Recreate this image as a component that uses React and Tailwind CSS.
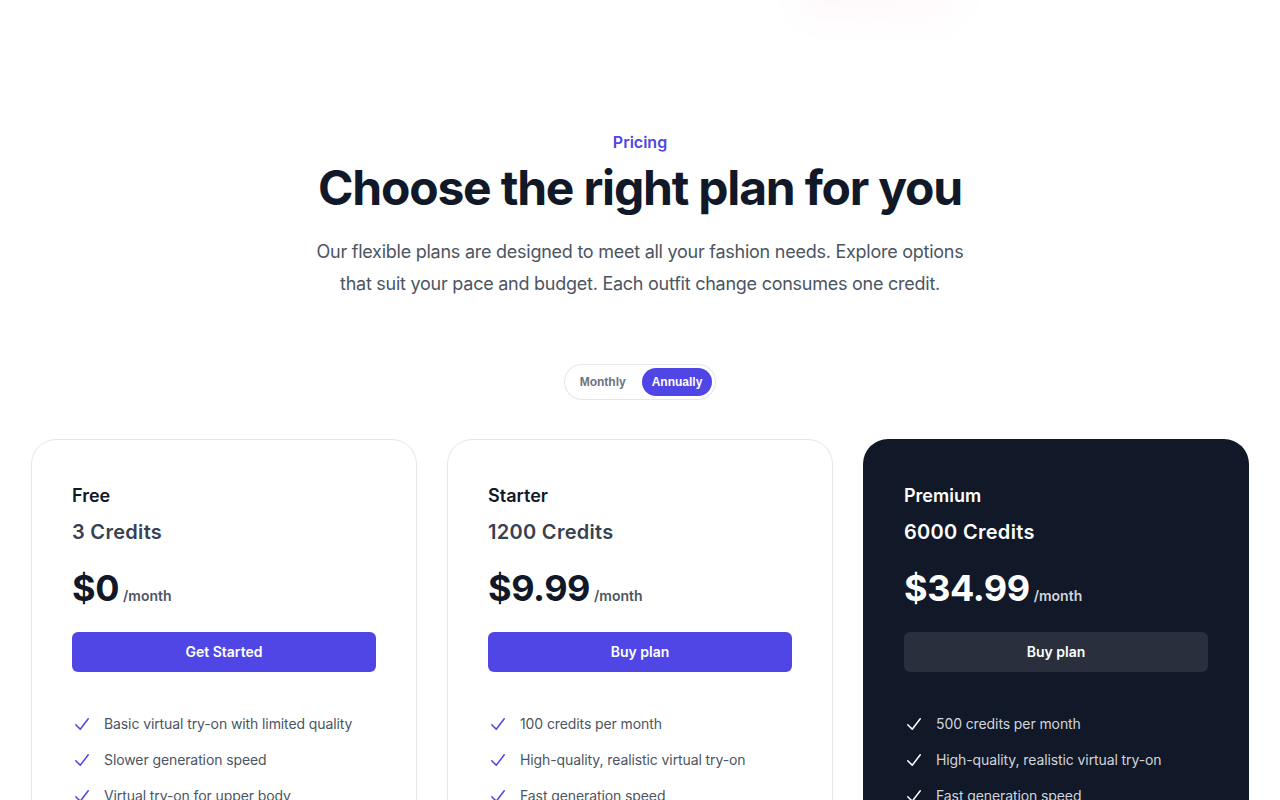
import React, { useState } from "react";

const plans = [
  {
    name: "Free",
    credits: "3 Credits",
    price: "$0",
    cta: "Get Started",
    featured: false,
    features: [
      "Basic virtual try-on with limited quality",
      "Slower generation speed",
      "Virtual try-on for upper body",
      "Community support",
    ],
  },
  {
    name: "Starter",
    credits: "1200 Credits",
    price: "$9.99",
    cta: "Buy plan",
    featured: false,
    features: [
      "100 credits per month",
      "High-quality, realistic virtual try-on",
      "Fast generation speed",
      "Virtual try-on for full body",
    ],
  },
  {
    name: "Premium",
    credits: "6000 Credits",
    price: "$34.99",
    cta: "Buy plan",
    featured: true,
    features: [
      "500 credits per month",
      "High-quality, realistic virtual try-on",
      "Fast generation speed",
      "Priority support",
    ],
  },
];

function CheckIcon({ className }) {
  return (
    <svg viewBox="0 0 20 20" fill="currentColor" aria-hidden="true" className={className}>
      <path
        fillRule="evenodd"
        d="M16.704 4.153a.75.75 0 01.143 1.052l-8 10.5a.75.75 0 01-1.127.075l-4.5-4.5a.75.75 0 011.06-1.06l3.894 3.893 7.48-9.817a.75.75 0 011.05-.143z"
        clipRule="evenodd"
      />
    </svg>
  );
}

export default function App() {
  const [billing, setBilling] = useState("annually");

  return (
    <div className="relative isolate min-h-screen bg-white font-['Inter',sans-serif] overflow-hidden">
      {/* faint decorative blob */}
      <div className="absolute -top-8 left-[800px] -z-10 h-12 w-[160px] rounded-full bg-gradient-to-r from-[#ff80b5] to-[#f9a8d4] opacity-[0.07] blur-lg" />

      <div className="px-8 pt-32 pb-24">
        <div className="mx-auto max-w-4xl text-center">
          <h2 className="text-base font-semibold leading-7 text-[#4f46e5]">Pricing</h2>
          <p className="mt-2 text-5xl font-bold leading-none tracking-tight text-[#111827]">
            Choose the right plan for you
          </p>
        </div>
        <p className="mx-auto mt-6 max-w-2xl text-center text-lg leading-8 tracking-[-0.014em] text-[#4b5563]">
          Our flexible plans are designed to meet all your fashion needs. Explore options that suit your
          pace and budget. Each outfit change consumes one credit.
        </p>

        <div className="mt-16 flex justify-center">
          <div className="flex gap-x-1 rounded-full p-1 ring-1 ring-inset ring-[#e5e7eb] font-['Liberation_Sans',Arial,sans-serif] text-xs font-semibold leading-5">
            <button
              onClick={() => setBilling("monthly")}
              className={
                billing === "monthly"
                  ? "rounded-full bg-[#4f46e5] px-3 py-1 text-white"
                  : "rounded-full px-3 py-1 text-[#6b7280]"
              }
            >
              Monthly
            </button>
            <button
              onClick={() => setBilling("annually")}
              className={
                billing === "annually"
                  ? "rounded-full bg-[#4f46e5] px-2.5 py-1 text-white"
                  : "rounded-full px-2.5 py-1 text-[#6b7280]"
              }
            >
              Annually
            </button>
          </div>
        </div>

        <div className="mx-auto mt-10 grid grid-cols-3 gap-8">
          {plans.map((plan) => (
            <div
              key={plan.name}
              className={
                plan.featured
                  ? "rounded-3xl bg-[#111827] p-10 ring-1 ring-[#111827]"
                  : "rounded-3xl bg-white p-10 ring-1 ring-[#e5e7eb]"
              }
            >
              <h3 className={"text-lg font-semibold leading-8 " + (plan.featured ? "text-white" : "text-[#111827]")}>
                {plan.name}
              </h3>
              <p
                className={
                  "mt-1 text-xl font-semibold leading-8 tracking-[0.015em] " +
                  (plan.featured ? "text-white" : "text-[#374151]")
                }
              >
                {plan.credits}
              </p>
              <p className="mt-5 flex items-baseline gap-x-1">
                <span
                  className={
                    "text-4xl font-bold leading-10 tracking-[-0.012em] " +
                    (plan.featured ? "text-white" : "text-[#111827]")
                  }
                >
                  {plan.price}
                </span>
                <span
                  className={"text-sm font-semibold leading-6 " + (plan.featured ? "text-[#d1d5db]" : "text-[#4b5563]")}
                >
                  /month
                </span>
              </p>
              <button
                className={
                  plan.featured
                    ? "mt-6 block w-full rounded-md bg-white/10 px-3 py-2 text-center text-sm font-semibold leading-6 text-white"
                    : "mt-6 block w-full rounded-md bg-[#4f46e5] px-3 py-2 text-center text-sm font-semibold leading-6 text-white"
                }
              >
                {plan.cta}
              </button>
              <ul
                className={
                  "mt-10 space-y-3 text-sm leading-6 tracking-[-0.007em] " +
                  (plan.featured ? "text-[#d1d5db]" : "text-[#4b5563]")
                }
              >
                {plan.features.map((feature) => (
                  <li key={feature} className="flex gap-x-3">
                    <CheckIcon
                      className={"h-6 w-5 flex-none " + (plan.featured ? "text-white" : "text-[#4f46e5]")}
                    />
                    {feature}
                  </li>
                ))}
              </ul>
            </div>
          ))}
        </div>
      </div>
    </div>
  );
}
